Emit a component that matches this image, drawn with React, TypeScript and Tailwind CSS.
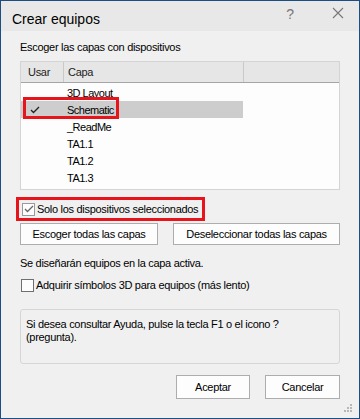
import React from 'react';

const layers = ['3D Layout', 'Schematic', '_ReadMe', 'TA1.1', 'TA1.2', 'TA1.3'];

function Check({ color = '#222' }: { color?: string }) {
  return (
    <svg width="10" height="8" viewBox="0 0 10 8" fill="none">
      <polyline points="1,4 3.5,6.5 9,1" stroke={color} strokeWidth="1.3" />
    </svg>
  );
}

export default function App() {
  return (
    <div
      className="w-[360px] h-[419px] border border-[#1b4f82] bg-[#f0f0f0] flex flex-col text-[11px] tracking-[-0.3px] text-black relative whitespace-nowrap"
      style={{ fontFamily: '"Liberation Sans", Arial, sans-serif' }}
    >
      {/* Title bar */}
      <div className="h-[30px] bg-[#e8e8e8] flex items-center shrink-0 tracking-normal">
        <span className="ml-[11px] text-[14px] mt-[6px]">Crear equipos</span>
        <span className="ml-auto text-[14px] text-[#777] mt-[-4px]">?</span>
        <svg className="ml-[38px] mr-[15px] mt-[-6px]" width="12" height="12" viewBox="0 0 12 12">
          <path d="M1 1 L11 11 M11 1 L1 11" stroke="#777" strokeWidth="1.1" />
        </svg>
      </div>

      <div className="px-[19px] flex flex-col">
        <div className="mt-[9px] h-[15px] leading-[15px]">Escoger las capas con dispositivos</div>

        {/* List */}
        <div className="mt-[6px] h-[129px] border border-[#d4d4d4] bg-[#fdfdfd] flex flex-col">
          <div className="h-[21px] bg-[#e6e6e6] border-b border-[#a5a5a5] flex text-[#222]">
            <div className="w-[42px] pl-[7px] leading-[21px]">Usar</div>
            <div className="w-[180px] border-l border-[#c9c9c9] pl-[4px] leading-[21px]">Capa</div>
            <div className="flex-1 border-l border-[#c9c9c9]" />
          </div>
          <div className="mt-[1px] flex flex-col tracking-[-0.5px]">
            {layers.map((l, i) => (
              <div key={l} className="h-[17px] flex relative">
                <div className={`w-[222px] flex ${i === 1 ? 'bg-[#cdcdcd]' : ''}`}>
                  <div className="w-[42px] flex items-center pl-[9px]">{i === 1 && <Check />}</div>
                  <div className="pl-[4px] leading-[18px]">{l}</div>
                </div>
                {i === 1 && (
                  <div className="absolute left-[2px] top-[-4px] w-[96px] h-[22px] border-[3px] border-[#e8141b]" />
                )}
              </div>
            ))}
          </div>
        </div>

        {/* Solo los dispositivos seleccionados */}
        <div className="mt-[7px] ml-[-4px] self-start h-[24px] w-[189px] border-[3px] border-[#e8141b] flex items-center">
          <div className="ml-[3px] w-[13px] h-[13px] border border-[#9a9a9a] bg-[#fdfdfd] flex items-center justify-center">
            <Check color="#666" />
          </div>
          <span className="ml-[2px]">Solo los dispositivos seleccionados</span>
        </div>

        <div className="mt-[2px] flex justify-between">
          <button className="w-[138px] h-[22px] border border-[#adadad] bg-[#fdfdfd]">
            Escoger todas las capas
          </button>
          <button className="w-[167px] h-[22px] border border-[#adadad] bg-[#fdfdfd]">
            Deseleccionar todas las capas
          </button>
        </div>

        <div className="mt-[11px] h-[15px] leading-[15px]">Se diseñarán equipos en la capa activa.</div>

        <div className="mt-[7px] flex items-center h-[15px]">
          <div className="ml-[1px] w-[13px] h-[13px] border border-[#6f6f6f] bg-[#fdfdfd]" />
          <span className="ml-[2px]">Adquirir símbolos 3D para equipos (más lento)</span>
        </div>

        <div className="mt-[16px] h-[55px] rounded-[3px] border border-[#d6d6d6] px-[5px] pt-[8px] leading-[13px]">
          Si desea consultar Ayuda, pulse la tecla F1 o el icono ?
          <br />
          (pregunta).
        </div>

        <div className="mt-[11px] flex justify-end gap-[15px]">
          <button className="w-[74px] h-[24px] border border-[#adadad] bg-[#fdfdfd]">Aceptar</button>
          <button className="w-[75px] h-[24px] border border-[#adadad] bg-[#fdfdfd]">Cancelar</button>
        </div>
      </div>

      {/* size grip */}
      <svg className="absolute right-[7px] bottom-[6px]" width="8" height="8" viewBox="0 0 8 8">
        <rect x="6" y="0" width="2" height="2" fill="#b8b8b8" />
        <rect x="3" y="3" width="2" height="2" fill="#b8b8b8" />
        <rect x="6" y="3" width="2" height="2" fill="#b8b8b8" />
        <rect x="0" y="6" width="2" height="2" fill="#b8b8b8" />
        <rect x="3" y="6" width="2" height="2" fill="#b8b8b8" />
        <rect x="6" y="6" width="2" height="2" fill="#b8b8b8" />
      </svg>
    </div>
  );
}
